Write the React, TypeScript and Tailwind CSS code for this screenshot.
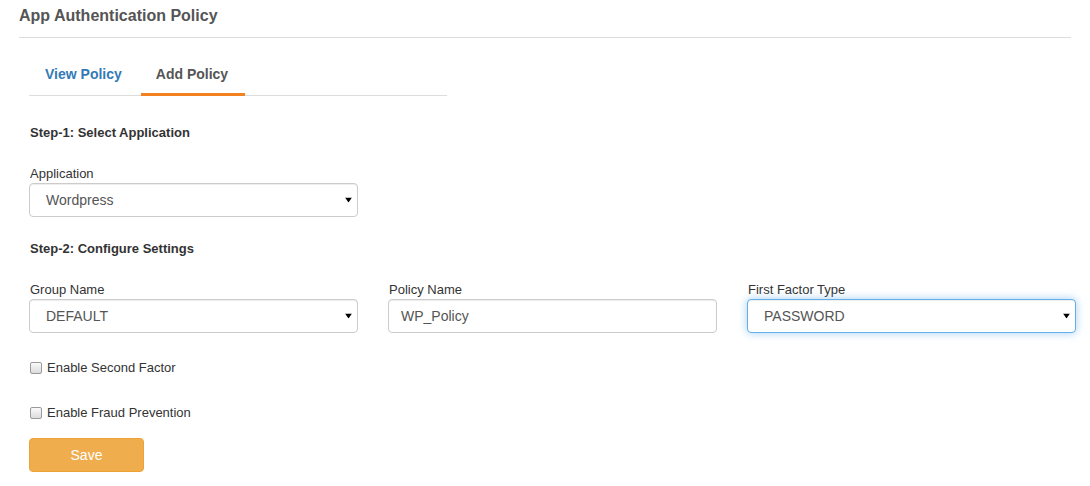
import React from "react";

function Arrow() {
  return (
    <svg className="absolute right-[5px] top-1/2 -translate-y-1/2" width="7" height="5" viewBox="0 0 7 5">
      <path d="M0 0 H7 L3.5 5 Z" fill="#000" />
    </svg>
  );
}

function Select({ value, focus }: { value: string; focus?: boolean }) {
  return (
    <div
      className={
        "relative h-[34px] w-full rounded-[4px] border bg-white pl-[16px] text-[14px] leading-[32px] text-[#555] " +
        (focus
          ? "border-[#66afe9] shadow-[inset_0_1px_1px_rgba(0,0,0,0.075),0_0_8px_rgba(102,175,233,0.6)]"
          : "border-[#ccc] shadow-[inset_0_1px_1px_rgba(0,0,0,0.075)]")
      }
    >
      {value}
      <Arrow />
    </div>
  );
}

function Input({ value }: { value: string }) {
  return (
    <div className="h-[34px] w-full rounded-[4px] border border-[#ccc] bg-white pl-[12px] text-[14px] leading-[32px] text-[#555] shadow-[inset_0_1px_1px_rgba(0,0,0,0.075)]">
      {value}
    </div>
  );
}

function Check({ label, className }: { label: string; className?: string }) {
  return (
    <div className={"flex items-center text-[13px] leading-[18px] text-[#333] " + (className ?? "")}>
      <span className="ml-[1px] mr-[5px] inline-block h-[12px] w-[12px] rounded-[2px] border border-[#9a9a9a] bg-gradient-to-b from-[#fafafa] to-[#dcdcdc]" />
      <span>{label}</span>
    </div>
  );
}

export default function App() {
  return (
    <div className="min-h-[486px] w-[1090px] bg-white px-[19px] font-['Liberation_Sans',Arial,sans-serif]">
      <div className="h-[38px] border-b border-[#ddd] pt-[6px] text-[16px] font-bold leading-[20px] text-[#555]">
        App Authentication Policy
      </div>
      <div className="pl-[10px]">
        <div className="mt-[16px] flex h-[42px] w-[418px] border-b border-[#ddd]">
          <div className="-mb-px h-[42px] border-b-[3px] border-transparent pl-[16px] pr-[19px] pt-[10px] text-[14px] font-bold leading-[20px] text-[#337ab7]">
            View Policy
          </div>
          <div className="-mb-px h-[42px] border-b-[3px] border-[#f48120] pl-[15px] pr-[17px] pt-[10px] text-[14px] font-bold leading-[20px] text-[#555]">
            Add Policy
          </div>
        </div>

        <div className="ml-[1px] mt-[28px] text-[13px] font-bold leading-[18px] text-[#333]">
          Step-1: Select Application
        </div>
        <div className="ml-[1px] mt-[22px] pt-[1px] text-[13px] leading-[18px] text-[#333]">Application</div>
        <div className="w-[329px]">
          <Select value="Wordpress" />
        </div>

        <div className="ml-[1px] mt-[23px] text-[13px] font-bold leading-[18px] text-[#333]">
          Step-2: Configure Settings
        </div>
        <div className="mt-[22px] grid w-[1047px] grid-cols-3 gap-x-[30px]">
          <div>
            <div className="ml-[1px] pt-[1px] text-[13px] leading-[18px] text-[#333]">Group Name</div>
            <Select value="DEFAULT" />
          </div>
          <div>
            <div className="ml-[1px] pt-[1px] text-[13px] leading-[18px] text-[#333]">Policy Name</div>
            <Input value="WP_Policy" />
          </div>
          <div>
            <div className="ml-[1px] pt-[1px] text-[13px] leading-[18px] text-[#333]">First Factor Type</div>
            <Select value="PASSWORD" focus />
          </div>
        </div>

        <Check label="Enable Second Factor" className="mt-[26px]" />
        <Check label="Enable Fraud Prevention" className="mt-[27px]" />

        <button className="mt-[16px] h-[34px] w-[115px] rounded-[4px] border border-[#eea236] bg-[#f0ad4e] text-[14px] leading-[20px] text-white">
          Save
        </button>
      </div>
    </div>
  );
}
